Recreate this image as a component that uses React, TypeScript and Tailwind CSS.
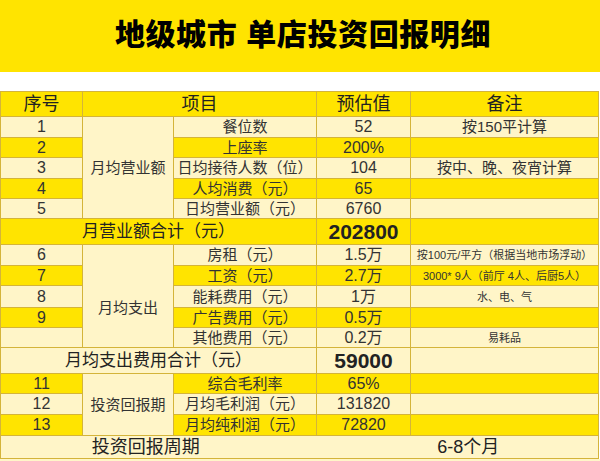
import React from "react";

const B = "bg-[#FFE400]";
const P = "bg-[#FFF5C8]";

type Cell = {
  t?: React.ReactNode;
  cls?: string;
  span?: number;
  rows?: number;
  bg?: string;
};

const td =
  "border border-[#d4b43a] text-center align-middle p-0 whitespace-nowrap overflow-visible leading-[16px]";

function Row({ h, bg, cells }: { h: string; bg: string; cells: Cell[] }) {
  return (
    <tr className={h}>
      {cells.map((c, i) => (
        <td
          key={i}
          colSpan={c.span}
          rowSpan={c.rows}
          className={`${td} ${c.bg ?? bg} ${c.cls ?? ""}`}
        >
          {c.t}
        </td>
      ))}
    </tr>
  );
}

export default function App() {
  const n = "text-[16px] text-[#333]";
  const it = "text-[15px] text-[#333]";
  const v = "text-[16px] text-[#333]";
  const note = "text-[15px] text-[#333]";
  const sm = "text-[11px] text-[#333]";
  const hd = "text-[18px] text-[#222] leading-[20px]";
  const sum = "text-[17px] text-[#222] leading-[20px]";
  const big = "text-[21px] font-bold text-[#222] leading-[22px]";
  return (
    <div className="w-[600px] h-[461px] bg-white overflow-hidden font-['Liberation_Sans','Noto_Sans_CJK_SC',sans-serif]">
      <div className="h-[72px] bg-[#FFE400] flex items-center justify-center">
        <h1 className="text-[30px] font-black text-black tracking-[0.6px] leading-none pb-[3px] pl-[6px]">
          地级城市 单店投资回报明细
        </h1>
      </div>
      <div className="h-[19px]" />
      <table className="w-[598px] table-fixed border-collapse">
        <colgroup>
          <col className="w-[82px]" />
          <col className="w-[91px]" />
          <col className="w-[143px]" />
          <col className="w-[94px]" />
          <col className="w-[188px]" />
        </colgroup>
        <tbody>
          <Row
            h="h-[25px]"
            bg={B}
            cells={[
              { t: "序号", cls: hd },
              { t: "项目", span: 2, cls: hd },
              { t: "预估值", cls: hd },
              { t: "备注", cls: hd },
            ]}
          />
          <Row
            h="h-[21px]"
            bg={P}
            cells={[
              { t: "1", cls: n },
              { t: "月均营业额", rows: 5, bg: P, cls: it },
              { t: "餐位数", cls: it },
              { t: "52", cls: v },
              { t: "按150平计算", cls: note },
            ]}
          />
          <Row
            h="h-[20px]"
            bg={B}
            cells={[
              { t: "2", cls: n },
              { t: "上座率", cls: it },
              { t: "200%", cls: v },
              { t: "", cls: note },
            ]}
          />
          <Row
            h="h-[21px]"
            bg={P}
            cells={[
              { t: "3", cls: n },
              { t: "日均接待人数（位）", cls: it },
              { t: "104", cls: v },
              { t: "按中、晚、夜宵计算", cls: note },
            ]}
          />
          <Row
            h="h-[20px]"
            bg={B}
            cells={[
              { t: "4", cls: n },
              { t: "人均消费（元）", cls: it },
              { t: "65", cls: v },
              { t: "", cls: note },
            ]}
          />
          <Row
            h="h-[20px]"
            bg={P}
            cells={[
              { t: "5", cls: n },
              { t: "日均营业额（元）", cls: it },
              { t: "6760", cls: v },
              { t: "", cls: note },
            ]}
          />
          <Row
            h="h-[26px]"
            bg={B}
            cells={[
              { t: "月营业额合计（元）", span: 3, cls: sum },
              { t: "202800", cls: big },
              { t: "", cls: note },
            ]}
          />
          <Row
            h="h-[21px]"
            bg={P}
            cells={[
              { t: "6", cls: n },
              {
                t: <span className="relative top-[12px]">月均支出</span>,
                rows: 5,
                bg: P,
                cls: it,
              },
              { t: "房租（元）", cls: it },
              { t: "1.5万", cls: v },
              { t: "按100元/平方（根据当地市场浮动）", cls: sm },
            ]}
          />
          <Row
            h="h-[20px]"
            bg={B}
            cells={[
              { t: "7", cls: n },
              { t: "工资（元）", cls: it },
              { t: "2.7万", cls: v },
              { t: "3000* 9人（前厅 4人、后厨5人）", cls: sm },
            ]}
          />
          <Row
            h="h-[22px]"
            bg={P}
            cells={[
              { t: "8", cls: n },
              { t: "能耗费用（元）", cls: it },
              { t: "1万", cls: v },
              { t: "水、电、气", cls: sm },
            ]}
          />
          <Row
            h="h-[20px]"
            bg={B}
            cells={[
              { t: "9", cls: n },
              { t: "广告费用（元）", cls: it },
              { t: "0.5万", cls: v },
              { t: "", cls: note },
            ]}
          />
          <Row
            h="h-[20px]"
            bg={P}
            cells={[
              { t: "", cls: n },
              { t: "其他费用（元）", cls: it },
              { t: "0.2万", cls: v },
              { t: "易耗品", cls: sm },
            ]}
          />
          <Row
            h="h-[26px]"
            bg={P}
            cells={[
              { t: "月均支出费用合计（元）", span: 3, cls: sum },
              { t: "59000", cls: big },
              { t: "", cls: note },
            ]}
          />
          <Row
            h="h-[20px]"
            bg={B}
            cells={[
              { t: "11", cls: n },
              { t: "投资回报期", rows: 3, bg: P, cls: it },
              { t: "综合毛利率", cls: it },
              { t: "65%", cls: v },
              { t: "", cls: note },
            ]}
          />
          <Row
            h="h-[21px]"
            bg={P}
            cells={[
              { t: "12", cls: n },
              { t: "月均毛利润（元）", cls: it },
              { t: "131820", cls: v },
              { t: "", cls: note },
            ]}
          />
          <Row
            h="h-[21px]"
            bg={B}
            cells={[
              { t: "13", cls: n },
              { t: "月均纯利润（元）", cls: it },
              { t: "72820", cls: v },
              { t: "", cls: note },
            ]}
          />
          <Row
            h="h-[23px]"
            bg={P}
            cells={[
              {
                t: <span className="relative left-[-13px]">投资回报周期</span>,
                span: 3,
                cls: `${hd} border-r-0`,
              },
              {
                t: <span className="relative left-[11px]">6-8个月</span>,
                span: 2,
                cls: `${hd} border-l-0`,
              },
            ]}
          />
        </tbody>
      </table>
      <div className="h-[4px] bg-[#FFF5C8]" />
    </div>
  );
}
